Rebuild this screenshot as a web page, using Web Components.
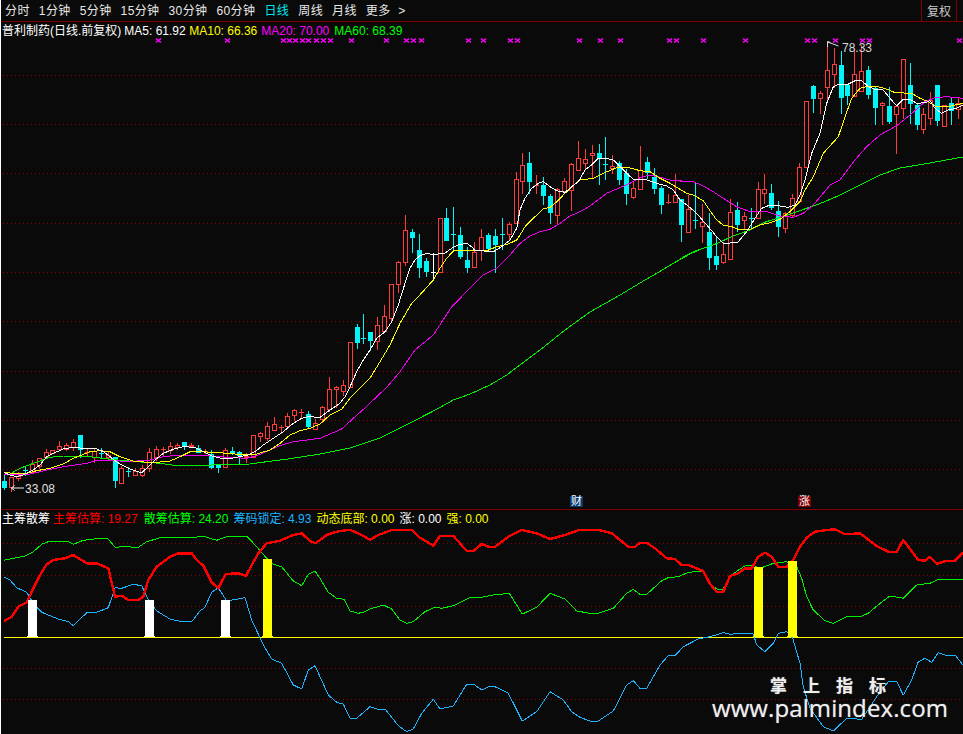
<!DOCTYPE html>
<html lang="zh"><head><meta charset="utf-8"><title>普利制药</title>
<style>
html,body{margin:0;padding:0;background:#fff;height:100%;overflow:hidden}
body{font:12px "Liberation Sans","Noto Sans CJK SC",sans-serif}
</style></head>
<body>
<stock-terminal>
  <period-bar slot="bar">
    <period-tab>分时</period-tab><period-tab>1分钟</period-tab><period-tab>5分钟</period-tab><period-tab>15分钟</period-tab><period-tab>30分钟</period-tab><period-tab>60分钟</period-tab><period-tab active>日线</period-tab><period-tab>周线</period-tab><period-tab>月线</period-tab><period-tab>更多 &nbsp;&gt;</period-tab>
    <bar-button slot="end">复权</bar-button>
  </period-bar>
  <kline-pane slot="main">
    <legend-row>
      <legend-item style="--c:#fff;margin-right:3px">普利制药(日线.前复权)</legend-item>
      <legend-item style="--c:#fff;margin-right:3.5px">MA5: 61.92</legend-item>
      <legend-item style="--c:#ff0;margin-right:4px">MA10: 66.36</legend-item>
      <legend-item style="--c:#f0f;margin-right:5px">MA20: 70.00</legend-item>
      <legend-item style="--c:#0f0">MA60: 68.39</legend-item>
    </legend-row>
    <chart-badge style="--bg:#0b3a6e;left:569px;top:474px">财</chart-badge>
    <chart-badge style="--bg:#800000;left:797px;top:474px">涨</chart-badge>
  </kline-pane>
  <indicator-pane slot="sub">
    <legend-row>
      <legend-item style="--c:#fff;margin-right:3px">主筹散筹</legend-item>
      <legend-item style="--c:#f00;margin-right:6px">主筹估算: 19.27</legend-item>
      <legend-item style="--c:#0f0;margin-right:5px">散筹估算: 24.20</legend-item>
      <legend-item style="--c:#1eb4ff;margin-right:5px">筹码锁定: 4.93</legend-item>
      <legend-item style="--c:#ff0;margin-right:5px">动态底部: 0.00</legend-item>
      <legend-item style="--c:#fff;margin-right:5px">涨: 0.00</legend-item>
      <legend-item style="--c:#ff0">强: 0.00</legend-item>
    </legend-row>
    <water-mark></water-mark>
  </indicator-pane>
</stock-terminal>
<script>
const FONT='"Liberation Sans","Noto Sans CJK SC",sans-serif';
function el(tpl){return class extends HTMLElement{constructor(){super();this.attachShadow({mode:'open'}).innerHTML=tpl;}}}

customElements.define('stock-terminal',el(`<style>
:host{display:flex;flex-direction:column;width:962px;height:734px;margin-left:1px;background:#0a0a0a;color:#fff;font:12px ${FONT}}
</style><slot name="bar"></slot><slot name="main"></slot><slot name="sub"></slot>`));

customElements.define('period-bar',el(`<style>
:host{display:flex;align-items:stretch;height:21px;border-bottom:1px solid #800000;padding-left:4px;box-sizing:content-box}
.tabs{display:flex;align-items:center;gap:9px;flex:1}
.end{display:flex;margin-right:6px}
</style><div class="tabs"><slot></slot></div><div class="end"><slot name="end"></slot></div>`));

customElements.define('period-tab',class extends HTMLElement{constructor(){super();this.attachShadow({mode:'open'}).innerHTML=`<style>
:host{display:block;color:#e8e8e8;font-size:12px;line-height:20px;letter-spacing:.4px;white-space:nowrap}
:host([active]){color:#00e8f0}
</style><slot></slot>`;}});

customElements.define('bar-button',el(`<style>
:host{display:flex;align-items:center;justify-content:center;width:34px;border-left:1px solid #800000;border-right:1px solid #800000;color:#c8c8c8;font-size:12px}
</style><slot></slot>`));

customElements.define('legend-row',el(`<style>
:host{display:flex;align-items:center;height:18px;padding-left:1px;grid-area:1/1;align-self:start;position:relative;z-index:1;white-space:nowrap}
</style><slot></slot>`));

customElements.define('legend-item',el(`<style>
:host{display:block;color:var(--c);font-size:12px;line-height:18px}
</style><slot></slot>`));

customElements.define('chart-badge',el(`<style>
:host{position:absolute;display:block;width:13px;height:11px;line-height:11px;text-align:center;background:var(--bg);color:#fff;font-size:11px;z-index:2}
</style><slot></slot>`));

customElements.define('water-mark',el(`<style>
:host{position:absolute;right:15px;bottom:14px;display:flex;flex-direction:column;align-items:flex-end;z-index:2;color:#eee;pointer-events:none}
.cn{display:flex;gap:16px;font:700 17px "Noto Sans CJK SC",sans-serif;line-height:20px;margin-right:62px;text-shadow:0 0 1px #999}
.en{font:400 24px "Open Sans",sans-serif;line-height:25px;letter-spacing:.1px;text-shadow:0 0 1px #999}
</style><div class="cn"><span>掌</span><span>上</span><span>指</span><span>标</span></div><div class="en">www.palmindex.com</div>`));

/* data */
/* [x,top,bottom,high,low,kind]  r: hollow red, c: filled cyan, w: white */
const C=[[4,481,487,475,489,'c'],[11,477,487,477,491,'r'],[18,476,478,472,480,'r'],[25,470,470,467,475,'c'],[32,464,472,460,472,'r'],[39,458,466,458,468,'r'],[46,452,457,449,458,'r'],[52,450,453,450,453,'r'],[59,446,449,441,450,'r'],[66,445,449,443,450,'r'],[73,442,447,439,450,'r'],[80,435,449,435,457,'c'],[87,452,452,448,456,'r'],[94,451,457,448,462,'r'],[101,453,453,448,458,'c'],[108,455,457,452,459,'r'],[115,457,480,457,487,'c'],[121,468,483,466,483,'r'],[128,471,471,467,476,'c'],[135,471,475,468,475,'r'],[142,468,475,465,476,'r'],[149,452,468,448,471,'r'],[156,449,457,446,460,'r'],[163,449,449,447,455,'r'],[170,446,450,442,453,'r'],[177,445,447,443,449,'r'],[184,442,446,442,449,'c'],[191,445,446,443,447,'r'],[198,448,452,445,452,'c'],[205,451,451,449,453,'r'],[211,454,467,450,468,'c'],[218,465,467,465,472,'c'],[225,450,467,448,467,'r'],[232,451,453,447,454,'c'],[239,452,455,451,463,'c'],[246,456,457,453,462,'r'],[253,435,457,435,457,'r'],[260,433,436,432,441,'r'],[267,426,438,422,440,'r'],[274,424,430,417,430,'r'],[281,427,427,425,433,'r'],[287,416,426,413,426,'r'],[294,410,415,409,420,'r'],[301,412,412,409,417,'r'],[308,414,426,411,427,'c'],[315,423,429,419,429,'r'],[322,407,419,406,422,'r'],[329,389,409,377,411,'r'],[336,387,389,386,407,'r'],[343,385,391,380,395,'r'],[350,342,387,342,387,'r'],[357,327,342,324,348,'c'],[363,338,338,314,343,'c'],[370,332,340,332,350,'c'],[377,325,341,317,349,'r'],[384,316,331,305,331,'r'],[391,284,318,284,320,'r'],[398,262,284,261,292,'r'],[405,230,262,215,265,'r'],[412,232,237,229,252,'c'],[419,250,267,234,277,'c'],[426,261,271,258,276,'c'],[433,272,272,253,280,'w'],[440,218,272,218,272,'r'],[446,218,240,208,240,'c'],[453,234,234,207,251,'c'],[460,235,256,227,258,'c'],[467,260,267,247,272,'c'],[474,252,267,242,267,'r'],[481,237,250,229,260,'r'],[488,235,248,233,248,'c'],[495,236,244,229,272,'c'],[502,234,234,218,249,'c'],[509,224,234,222,240,'r'],[516,179,223,172,223,'r'],[522,165,181,153,193,'r'],[529,163,181,152,193,'c'],[536,185,185,175,193,'r'],[543,185,195,177,204,'c'],[550,196,212,194,223,'c'],[557,189,215,188,223,'r'],[564,181,191,178,191,'r'],[571,164,190,163,210,'r'],[578,158,170,141,170,'r'],[585,159,163,149,168,'r'],[592,153,155,145,178,'r'],[599,153,157,144,184,'c'],[605,164,164,137,179,'c'],[612,166,168,155,173,'r'],[619,163,179,161,184,'c'],[626,173,193,169,204,'c'],[633,188,197,182,198,'r'],[640,170,189,146,189,'r'],[647,162,172,157,178,'c'],[654,177,188,168,193,'c'],[661,188,204,186,213,'c'],[668,202,202,194,203,'r'],[675,195,202,174,202,'r'],[681,199,224,199,241,'c'],[688,209,232,195,232,'r'],[695,220,220,183,228,'c'],[702,222,226,204,242,'r'],[709,232,257,213,269,'c'],[716,256,264,237,269,'c'],[723,254,262,242,263,'r'],[730,212,259,199,259,'r'],[737,210,224,202,231,'c'],[744,216,220,212,228,'r'],[751,218,218,208,228,'c'],[758,189,218,182,218,'r'],[764,189,193,174,203,'r'],[771,193,207,184,209,'c'],[778,211,226,201,236,'c'],[785,213,228,212,232,'r'],[792,198,215,194,217,'r'],[799,167,201,163,201,'r'],[806,101,167,101,167,'r'],[813,86,98,85,112,'c'],[820,93,98,91,113,'r'],[827,70,87,42,99,'r'],[834,64,74,48,87,'r'],[841,65,97,51,113,'c'],[847,85,95,85,104,'c'],[854,74,96,49,96,'r'],[861,71,91,45,91,'r'],[868,70,94,66,98,'c'],[875,88,107,86,124,'c'],[882,103,105,102,124,'r'],[889,106,121,87,123,'c'],[896,106,114,105,153,'r'],[903,59,108,59,118,'r'],[910,85,103,63,123,'c'],[917,105,124,103,129,'c'],[923,114,129,108,133,'r'],[930,100,118,92,124,'r'],[937,85,120,85,125,'c'],[944,105,126,105,126,'r'],[951,103,110,98,124,'c'],[958,103,109,98,118,'r']];

const seg=(ox,oy,a)=>{const r=[];for(let i=0;i<a.length;i+=2)r.push([ox+a[i]/3,oy+a[i+1]/3]);return r;};
const MA={
 white:[...seg(0,400,[13,218,30,225,50,230,70,225,100,210,120,195,140,170,160,160,190,147,220,142,260,146,290,147,310,155,330,170,345,182,365,195,385,205,405,212,425,218,445,200,465,180,490,160,520,148,550,140,585,142,610,155,635,168,660,174,700,174,720,170,745,165,765,155,790,135,820,115,850,95,880,70,905,55,925,50,960,52]),
  ...seg(320,190,[30,660,60,640,75,620,90,590,110,545,130,510,150,480,170,445,195,425,215,395,235,345,255,280,270,235,285,210,300,197,320,190,340,194,375,189,395,175,415,165,440,160,455,170,465,182,480,180,500,185,520,185,545,170,570,150,590,115]),
  ...seg(500,130,[60,240,75,205,95,175,115,160,130,155,150,170,170,182,195,187,215,170,235,155,255,120,275,105,295,85,320,85,340,90,360,110,380,130,400,148,440,150,470,160,500,168,520,180,540,210,560,225,585,245]),
  ...seg(680,130,[60,262,85,290,110,320,130,340,172,338,200,305,225,265,245,235,270,225,300,228,325,232,345,225,360,195,375,150,395,70]),
  ...seg(800,30,[60,310,80,220,100,170,115,163,140,165,165,152,185,152,205,170,225,178,250,180,270,205,290,228,310,208,330,208,350,220,375,218,390,212,405,235,425,250,445,240,470,235,489,225])],
 yellow:[...seg(0,400,[13,216,45,222,80,220,110,212,150,205,190,192,220,175,245,165,270,155,300,152,330,155,360,170,400,183,440,187,470,187,510,183,540,170,570,155,600,155,640,157,680,160,740,165,770,162,810,150,840,130,870,105,900,92,930,85,960,72]),
  [330,415],...seg(320,190,[65,658,90,625,120,595,150,565,180,515,210,465,240,400,275,340,295,320,340,270,360,235,380,205,400,183,430,180,460,182,500,182,530,170,565,162,590,150]),
  ...seg(500,130,[60,315,75,290,100,265,130,237,150,232,170,215,190,195,215,170,240,150,280,145,310,130,350,113,390,114,420,122,450,125,480,145,510,160,535,175,560,190,580,195]),
  ...seg(680,130,[70,212,85,235,110,270,130,285,155,290,180,300,210,298,240,285,270,278,300,268,330,245,360,215,375,180,400,140,430,70]),
  ...seg(800,30,[115,320,135,260,155,205,180,175,200,170,235,170,262,178,285,188,335,190,360,205,385,215,405,228,445,230,465,225,489,220])],
 magenta:[...seg(0,400,[13,222,50,225,90,222,120,215,155,207,190,200,225,195,260,190,285,183,320,180,360,183,410,183,450,180,490,170,540,165,590,165,640,168,680,172,740,175,770,167,810,150,845,135,880,125,920,120,960,115]),
  ...seg(190,280,[455,447,490,415,535,375]),
  ...seg(320,190,[160,630,200,592,240,545,285,480,340,435,395,350,430,315,490,255,530,235,570,195]),
  ...seg(500,130,[60,340,90,318,120,305,150,298,180,280,210,258,240,245,270,228,300,205,320,190,350,177,390,160,420,143,450,135,480,142,510,150,545,153,570,155]),
  ...seg(680,130,[0,155,40,155,70,168,100,185,130,205,170,230,210,245,260,245,300,258,340,262,370,250,400,225,430,190,450,165,480,150]),
  ...seg(800,30,[165,390,200,350,240,315,290,287,330,255,375,215,405,203,440,200,489,205])],
 green:[...seg(0,400,[30,222,60,205,100,190,150,172,190,168,270,170,330,178,410,185,480,190,530,197,600,196,750,192,800,185,870,176,960,162]),
  [350,448],[380,438],[410,423],...seg(320,190,[350,658,400,630,450,612,510,585,560,555,600,525]),
  [540,350],[565,330],[590,312],[620,295],...seg(500,130,[435,450,470,430,520,400,570,372,600,358]),
  ...seg(680,130,[0,387,40,365,100,345,160,318,210,300,250,278,300,262,350,245,400,228,430,217,480,195]),
  [860,185],[880,175],[900,168],[930,163],[963,157]]
};
const SUB={
 red:[...seg(0,505,[12,348,35,335,55,305,80,292,100,250,120,210,140,178,160,165,195,160,220,150,240,162,260,175,290,175,325,190,345,275,365,272,385,285,415,285,430,275,445,225,470,185,510,155,535,145,575,145,590,165,610,182,635,232,655,250,677,207,715,205,738,213,755,180,775,145,800,115,840,107,880,90,905,85,930,108,945,115]),
  ...seg(320,505,[0,105,20,90,50,80,90,74,125,90,150,105,175,90,215,75,275,75,300,98,340,122,360,92,400,92,440,138,460,138,485,117,505,125,525,125,565,95,605,75,650,85,690,102,735,90,780,74,835,74,875,85,925,125,945,125]),
  ...seg(640,490,[0,158,20,158,45,175,80,205,105,207,125,225,145,225,190,243,210,282,230,305,250,305,270,258,295,250,315,235,335,235,355,200,375,188,395,200,415,230,440,230,458,213,480,170,500,143,525,125,560,120,585,118,615,133,660,130,710,168,745,185,770,185,790,150,835,210,855,212,870,200,890,222,920,212,945,212,969,188])],
 green:[...seg(0,505,[12,166,75,153,100,140,125,118,150,108,200,108,220,118,250,106,300,100,325,102,345,127,370,125,415,127,440,110,485,97,585,97,610,94,650,106,680,95,740,93,770,125,800,160,820,178,845,185,880,228,905,242,925,208,945,198]),
  ...seg(320,505,[0,220,25,262,50,280,72,283,90,318,115,325,135,320,150,312,190,300,215,312,240,345,260,355,280,350,315,320,345,307,365,310,400,302,450,278,490,276,520,270,568,265,607,327,650,307,690,265,735,282,770,318,810,325,835,325,880,310,920,265,940,253]),
  ...seg(640,490,[0,313,20,313,65,272,85,263,115,260,145,247,190,243,207,280,230,297,250,297,270,258,300,237,320,225,340,225,360,235,400,220,440,215,470,230,485,265,500,320,520,360,555,392,580,400,620,380,660,380,685,370,710,348,750,318,790,325,830,285,870,280,895,268,969,268])],
 blue:[...seg(0,505,[12,216,30,225,50,248,80,262,100,295,125,322,175,342,205,350,220,362,260,323,290,322,325,308,345,248,365,250,400,238,425,242,445,285,470,318,510,342,545,350,575,350,600,318,615,307,635,262,655,248,680,288,735,278,755,345,790,420,815,462,845,475,880,540,905,552,925,495,945,482]),
  ...seg(320,505,[0,515,25,570,50,592,70,597,90,640,110,640,150,605,170,612,195,612,235,662,260,680,280,672,305,625,340,583,360,612,400,603,440,538,462,538,485,555,505,545,525,545,565,565,607,648,650,620,690,560,730,585,755,620,780,637,815,650,835,648,880,618,920,540,940,527]),
  ...seg(640,490,[0,595,20,595,60,525,85,497,105,497,130,470,175,447,210,440,250,428,270,433,300,430,340,432,350,465,375,485,400,460,415,430,440,425,458,445,480,520,490,590,510,655,550,710,580,723,620,685,665,688,710,620,745,575,770,575,790,615,815,570,835,515,855,505,875,517,895,488,915,495,945,495,969,525])]
};
const MARK=[158,227,283,289,295,302,308,316,323,330,351,386,406,413,421,468,483,510,517,579,600,620,669,676,703,745,807,814,835,862,869,959];
const pts=p=>p.map(q=>q[0].toFixed(1)+','+q[1].toFixed(1)).join(' ');
const line=(p,c,w=1)=>`<polyline points="${pts(p)}" fill="none" stroke="${c}" stroke-width="${w}" stroke-linejoin="round" shape-rendering="crispEdges"/>`;
const grid=(ys)=>ys.map(y=>`<line x1="3" x2="963" y1="${y+.5}" y2="${y+.5}" stroke="#8a0000" stroke-dasharray="1 3" shape-rendering="crispEdges"/>`).join('');

customElements.define('kline-pane',class extends HTMLElement{constructor(){super();
 const R='#ff3c3c',Cy='#00f6f6';let s='';
 s+=grid([75,124,173,223,272,321,371,420,469]);
 for(const [x,t,b,h,l,k] of C){
  const col=k=='r'?R:k=='c'?Cy:'#fff',X=x+.5;
  s+=`<line x1="${X}" x2="${X}" y1="${h}" y2="${l+1}" stroke="${col}" shape-rendering="crispEdges"/>`;
  if(b-t<1)s+=`<rect x="${x-2}" y="${t}" width="5" height="1" fill="${col}" shape-rendering="crispEdges"/>`;
  else if(k=='r')s+=`<rect x="${X-2}" y="${t+.5}" width="4" height="${b-t}" fill="#0a0a0a" stroke="${col}" shape-rendering="crispEdges"/>`;
  else s+=`<rect x="${x-2}" y="${t}" width="5" height="${b-t+1}" fill="${col}" shape-rendering="crispEdges"/>`;
 }
 s+=line(MA.green,'#00f000')+line(MA.magenta,'#f000f0')+line(MA.yellow,'#ffff00')+line(MA.white,'#ffffff');
 for(const x of MARK)s+=`<path d="M${x-2} 38.5l5 4M${x+3} 38.5l-5 4" stroke="#ff00ff" stroke-width="1.6"/>`;
 s+=`<path d="M11.5 488H24M11.5 488l3-2.5M11.5 488l3 2.5" stroke="#eee" fill="none"/>`;
 s+=`<text x="25" y="493" fill="#e0e0e0" font-size="12" font-family='${FONT}'>33.08</text>`;
 s+=`<path d="M827.5 47v-5.5l3 1M827.5 42l11 4" stroke="#ddd" fill="none"/>`;
 s+=`<text x="842" y="52" fill="#d8d8d8" font-size="12" font-family='${FONT}'>78.33</text>`;
 this.attachShadow({mode:'open'}).innerHTML=`<style>
 :host{display:grid;position:relative;height:487px;border-bottom:1px solid #800000;overflow:hidden}
 svg{grid-area:1/1;display:block;width:962px;height:487px}
 </style><svg viewBox="1 22 962 487">${s}</svg><slot></slot>`;
}});

customElements.define('indicator-pane',class extends HTMLElement{constructor(){super();
 let s=grid([543,575,606,668,699]);
 s+=`<rect x="4" y="637" width="959" height="1" fill="#ffff00"/>`;
 s+=line(SUB.blue,'#1eb4ff')+line(SUB.green,'#00f000');
 s+=line(SUB.red,'#ff0000',2.4);
 for(const [x,y] of [[28,600],[145,600],[221,600]])s+=`<rect x="${x}" y="${y}" width="9" height="${637-y}" fill="#fff"/><rect x="${x-1}" y="636" width="11" height="1" fill="#fff"/>`;
 for(const [x,y] of [[263,559],[754,567],[788,561]])s+=`<rect x="${x}" y="${y}" width="9" height="${637-y}" fill="#ff0"/><rect x="${x-1}" y="636" width="11" height="1" fill="#ff0"/>`;
 this.attachShadow({mode:'open'}).innerHTML=`<style>
 :host{display:grid;position:relative;flex:1;overflow:hidden}
 svg{grid-area:1/1;display:block;width:962px;height:224px}
 </style><svg viewBox="1 510 962 224">${s}</svg><slot></slot>`;
}});
</script>
</body></html>
